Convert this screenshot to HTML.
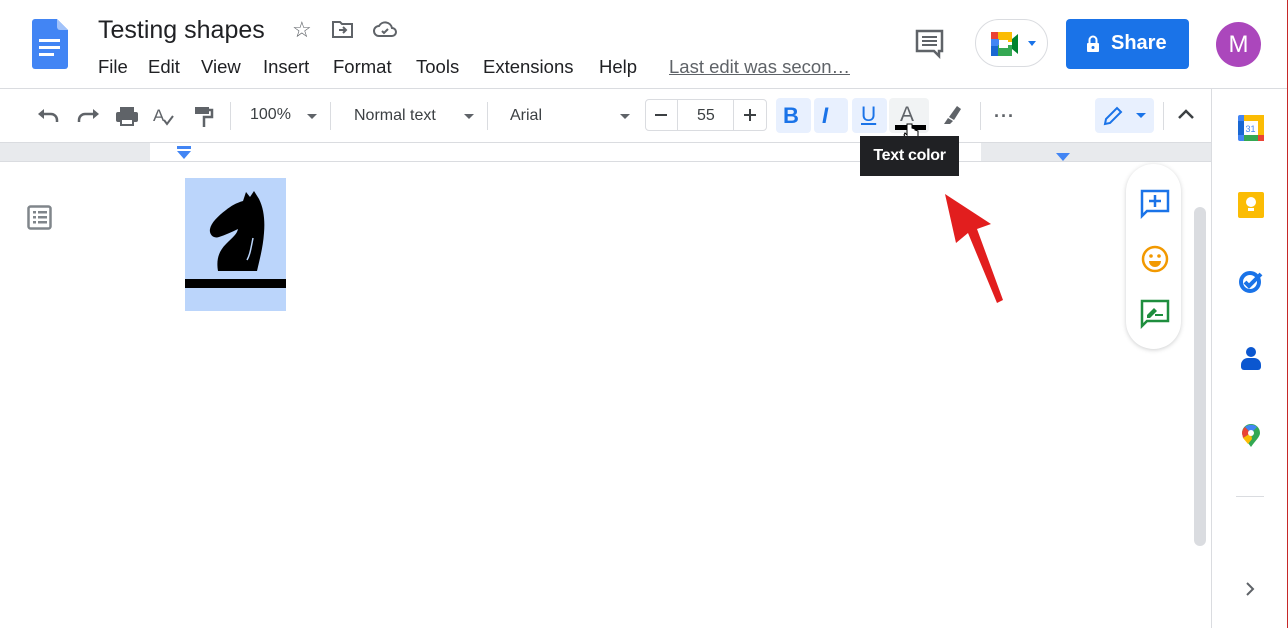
<!DOCTYPE html><html><head><style>
body{margin:0;width:1288px;height:628px;overflow:hidden;background:#fff;font-family:"Liberation Sans",Arial,sans-serif;position:relative;color:#3c4043}
.a{position:absolute}
.tb{font-size:16px;color:#3c4043}
.sep{position:absolute;top:102px;width:1px;height:28px;background:#dadce0}
</style></head><body>
<div class="a" style="right:0;top:0;width:1px;height:628px;background:#c62828"></div>
<svg class="a" style="left:32px;top:19px" width="36" height="50" viewBox="0 0 36 50"><path d="M3 0h22l11 11v36a3 3 0 0 1-3 3H3a3 3 0 0 1-3-3V3a3 3 0 0 1 3-3z" fill="#4285f4"/><path d="M25 0v8a3 3 0 0 0 3 3h8z" fill="#a1c2fa"/><rect x="7" y="20" width="21" height="3" fill="#fff"/><rect x="7" y="27" width="21" height="3" fill="#fff"/><rect x="7" y="34" width="15" height="3" fill="#fff"/></svg>
<div class="a" style="left:98px;top:16px;font-size:25px;color:#202124">Testing shapes</div>
<div class="a" style="left:292px;top:17px;font-size:22px;color:#5f6368">☆</div>
<svg class="a" style="left:332px;top:20px" width="22" height="18" viewBox="0 0 22 18"><path d="M1 2h7l2 2h10v13H1z" fill="none" stroke="#5f6368" stroke-width="2"/><path d="M7 10h7M11 7l3 3-3 3" fill="none" stroke="#5f6368" stroke-width="2"/></svg>
<svg class="a" style="left:373px;top:20px" width="24" height="18" viewBox="0 0 24 18"><path d="M6 16a5 5 0 0 1 0-10 7 7 0 0 1 13 2 4 4 0 0 1 0 8z" fill="none" stroke="#5f6368" stroke-width="2"/><path d="M9 11l2 2 4-4" fill="none" stroke="#5f6368" stroke-width="2"/></svg>
<div class="a" style="top:56px;left:98px;font-size:18.5px;color:#202124">
<span class="a" style="left:0">File</span><span class="a" style="left:50px">Edit</span><span class="a" style="left:103px">View</span><span class="a" style="left:165px">Insert</span><span class="a" style="left:235px">Format</span><span class="a" style="left:318px">Tools</span><span class="a" style="left:385px;white-space:nowrap">Extensions</span><span class="a" style="left:501px">Help</span></div>
<div class="a" style="left:669px;top:56px;font-size:18.5px;color:#5f6368;text-decoration:underline;white-space:nowrap">Last edit was secon…</div>
<svg class="a" style="left:915px;top:29px" width="30" height="30" viewBox="0 0 30 30"><path d="M2 2h25v20h-3v5l-5-5H2z" fill="none" stroke="#5f6368" stroke-width="2.5"/><rect x="7" y="7" width="15" height="2" fill="#5f6368"/><rect x="7" y="11" width="15" height="2" fill="#5f6368"/><rect x="7" y="15" width="15" height="2" fill="#5f6368"/></svg>
<div class="a" style="left:975px;top:19px;width:73px;height:48px;border:1px solid #dadce0;border-radius:25px;box-sizing:border-box"></div>
<svg class="a" style="left:990px;top:31px" width="46" height="26" viewBox="0 0 46 26"><rect x="1" y="1" width="12" height="12" fill="#ea4335"/><rect x="8" y="1" width="14" height="10" fill="#fbbc04"/><rect x="1" y="8" width="8" height="10" fill="#4285f4"/><rect x="1" y="15" width="8" height="10" fill="#1967d2"/><rect x="8" y="14" width="14" height="11" fill="#34a853"/><path d="M22 8l6-5v20l-6-5z" fill="#00832d"/><rect x="9" y="9" width="9" height="8" fill="#fff"/><path d="M38 10h8l-4 5z" fill="#1a73e8"/></svg>
<div class="a" style="left:1066px;top:19px;width:123px;height:50px;background:#1a73e8;border-radius:4px;color:#fff;font-size:20px;font-weight:bold"><svg class="a" style="left:20px;top:16px" width="14" height="18" viewBox="0 0 14 18"><path d="M3.5 8V5a3.5 3.5 0 0 1 7 0v3" fill="none" stroke="#fff" stroke-width="2"/><rect x="1" y="8" width="12" height="9" rx="1" fill="#fff"/><circle cx="7" cy="12.5" r="1.5" fill="#1a73e8"/></svg><span class="a" style="left:45px;top:13px">Share</span></div>
<div class="a" style="left:1216px;top:22px;width:45px;height:45px;border-radius:50%;background:#ab47bc;color:#fff;font-size:24px;text-align:center;line-height:45px">M</div>
<div class="a" style="left:0;top:88px;width:1287px;height:1px;background:#dadce0"></div>
<svg class="a" style="left:37px;top:106px" width="180" height="22" viewBox="0 0 180 22"><path d="M4 8h10a6 6 0 0 1 6 6v2" fill="none" stroke="#5f6368" stroke-width="2.5"/><path d="M1 8l6-5v10z" fill="#5f6368"/><path d="M58 8H48a6 6 0 0 0-6 6v2" fill="none" stroke="#5f6368" stroke-width="2.5"/><path d="M62 8l-6-5v10z" fill="#5f6368"/><rect x="83" y="1" width="14" height="5" fill="#5f6368"/><rect x="79" y="6" width="22" height="10" rx="2" fill="#5f6368"/><rect x="83" y="12" width="14" height="8" fill="#5f6368"/><rect x="85" y="14" width="10" height="4" fill="#fff"/><text x="116" y="15" font-size="17" fill="#5f6368" font-family="Liberation Sans">A</text><path d="M127 14l3 4 6-8" fill="none" stroke="#5f6368" stroke-width="2"/><rect x="158" y="1" width="14" height="7" fill="#5f6368"/><path d="M172 4h3v7h-8v10" fill="none" stroke="#5f6368" stroke-width="2.5"/></svg>
<div class="sep" style="left:230px"></div>
<div class="a tb" style="left:250px;top:106px">100%</div><div class="a" style="left:307px;top:114px;border:5px solid transparent;border-top-color:#5f6368"></div>
<div class="sep" style="left:330px"></div>
<div class="a tb" style="left:354px;top:107px">Normal text</div><div class="a" style="left:464px;top:114px;border:5px solid transparent;border-top-color:#5f6368"></div>
<div class="sep" style="left:487px"></div>
<div class="a tb" style="left:510px;top:107px">Arial</div><div class="a" style="left:620px;top:114px;border:5px solid transparent;border-top-color:#5f6368"></div>
<div class="a" style="left:645px;top:99px;width:122px;height:32px;border:1px solid #dadce0;border-radius:4px;box-sizing:border-box"></div>
<div class="a" style="left:677px;top:99px;width:1px;height:32px;background:#dadce0"></div><div class="a" style="left:733px;top:99px;width:1px;height:32px;background:#dadce0"></div>
<div class="a" style="left:655px;top:114px;width:12px;height:2px;background:#3c4043"></div>
<div class="a tb" style="left:697px;top:107px">55</div>
<div class="a" style="left:744px;top:114px;width:12px;height:2px;background:#3c4043"></div><div class="a" style="left:749px;top:109px;width:2px;height:12px;background:#3c4043"></div>
<div class="a" style="left:776px;top:98px;width:35px;height:35px;background:#e8f0fe;border-radius:4px"></div>
<div class="a" style="left:814px;top:98px;width:34px;height:35px;background:#e8f0fe;border-radius:4px"></div>
<div class="a" style="left:852px;top:98px;width:35px;height:35px;background:#e8f0fe;border-radius:4px"></div>
<div class="a" style="left:889px;top:98px;width:40px;height:35px;background:#f1f3f4;border-radius:4px"></div>
<div class="a" style="left:783px;top:103px;font-size:22px;font-weight:bold;color:#1a73e8">B</div>
<div class="a" style="left:822px;top:103px;font-size:22px;font-weight:bold;font-style:italic;color:#1a73e8">I</div>
<div class="a" style="left:861px;top:103px;font-size:21px;color:#1a73e8;text-decoration:underline">U</div>
<div class="a" style="left:900px;top:103px;font-size:21px;color:#5f6368">A</div>
<div class="a" style="left:895px;top:125px;width:31px;height:5px;background:#000"></div>
<svg class="a" style="left:903px;top:122px" width="16" height="22" viewBox="0 0 16 22"><path d="M4 2v11l-2-2-1 2 5 7h8l1-6v-5l-3-1v-1l-3-1V2z" fill="#fff" stroke="#000"/></svg>
<svg class="a" style="left:940px;top:104px" width="22" height="22" viewBox="0 0 22 22"><path d="M9 13l8-11 4 3-7 11z" fill="#5f6368"/><path d="M8 14l5 3-3 3H4z" fill="#5f6368"/></svg>
<div class="sep" style="left:980px"></div>
<div class="a" style="left:994px;top:106px;font-size:18px;color:#5f6368;letter-spacing:1px;font-weight:bold">···</div>
<div class="a" style="left:1095px;top:98px;width:59px;height:35px;background:#e8f0fe;border-radius:4px"></div>
<svg class="a" style="left:1102px;top:105px" width="22" height="22" viewBox="0 0 22 22"><path d="M3 19l1-5L15 3l4 4L8 18z" fill="none" stroke="#1a73e8" stroke-width="2"/></svg>
<div class="a" style="left:1136px;top:113px;border:5px solid transparent;border-top-color:#1a73e8"></div>
<div class="sep" style="left:1163px"></div>
<svg class="a" style="left:1177px;top:108px" width="18" height="12" viewBox="0 0 18 12"><path d="M2 10l7-7 7 7" fill="none" stroke="#3c4043" stroke-width="2.5"/></svg>
<div class="a" style="left:0;top:142px;width:1211px;height:1px;background:#dadce0"></div>
<div class="a" style="left:0;top:143px;width:150px;height:18px;background:#e8eaed"></div>
<div class="a" style="left:981px;top:143px;width:230px;height:18px;background:#e8eaed"></div>
<div class="a" style="left:0;top:161px;width:1211px;height:1px;background:#dadce0"></div>
<div class="a" style="left:177px;top:146px;width:14px;height:3px;background:#4285f4"></div>
<div class="a" style="left:177px;top:151px;border-left:7px solid transparent;border-right:7px solid transparent;border-top:8px solid #4285f4"></div>
<div class="a" style="left:1056px;top:153px;border-left:7px solid transparent;border-right:7px solid transparent;border-top:8px solid #4285f4"></div>
<div class="a" style="left:860px;top:136px;width:99px;height:40px;background:#202124;color:#fff;font-size:16px;line-height:40px;text-align:center;font-weight:bold;letter-spacing:-0.3px">Text color</div>
<svg class="a" style="left:27px;top:205px" width="26" height="25" viewBox="0 0 26 25"><rect x="1.5" y="1.5" width="22" height="22" rx="2" fill="none" stroke="#80868b" stroke-width="2.5"/><rect x="6" y="6" width="3" height="2.5" fill="#80868b"/><rect x="11" y="6" width="9" height="2.5" fill="#80868b"/><rect x="6" y="11" width="3" height="2.5" fill="#80868b"/><rect x="11" y="11" width="9" height="2.5" fill="#80868b"/><rect x="6" y="16" width="3" height="2.5" fill="#80868b"/><rect x="11" y="16" width="9" height="2.5" fill="#80868b"/></svg>
<div class="a" style="left:185px;top:178px;width:101px;height:133px;background:#bbd5fb"></div>
<svg class="a" style="left:185px;top:178px" width="101" height="133" viewBox="0 0 101 133"><path d="M58 23l3-9 4 5 4-6 5 8c5 10 6 22 5 34-1 14-4 25-7 38H33c-2-12 1-20 8-27 7-7 11-10 12-15-6 3-13 6-19 8-6 2-10-3-9-8 1-6 8-13 16-19 5-4 10-7 17-9z" fill="#000"/><path d="M68 60c-2 10-3 17-6 22" stroke="#bbd5fb" stroke-width="1.5" fill="none"/><rect x="0" y="101" width="101" height="9" fill="#000"/></svg>
<svg class="a" style="left:935px;top:188px" width="80" height="120" viewBox="0 0 80 120"><path d="M10 6l46 30-14 5 26 71-6 3-29-70-12 10z" fill="#e21e1e"/></svg>
<div class="a" style="left:1126px;top:164px;width:55px;height:185px;border-radius:28px;background:#fff;box-shadow:0 1px 4px rgba(60,64,67,.25)"></div>
<svg class="a" style="left:1140px;top:189px" width="30" height="30" viewBox="0 0 30 30"><path d="M2 2h26v20H7l-5 5z" fill="none" stroke="#1a73e8" stroke-width="2.5"/><path d="M15 6v12M9 12h12" stroke="#1a73e8" stroke-width="2.5"/></svg>
<svg class="a" style="left:1140px;top:244px" width="30" height="30" viewBox="0 0 30 30"><circle cx="15" cy="15" r="12" fill="none" stroke="#f29900" stroke-width="2.5"/><circle cx="11" cy="12" r="1.8" fill="#f29900"/><circle cx="19" cy="12" r="1.8" fill="#f29900"/><path d="M9 17h12a6 6 0 0 1-12 0z" fill="#f29900"/></svg>
<svg class="a" style="left:1140px;top:299px" width="30" height="30" viewBox="0 0 30 30"><path d="M2 2h26v20H7l-5 5z" fill="none" stroke="#1e8e3e" stroke-width="2.5"/><path d="M7 16l7-7 3 3-7 7H7z" fill="#1e8e3e"/><rect x="15" y="15" width="8" height="2" fill="#1e8e3e"/></svg>
<div class="a" style="left:1194px;top:207px;width:12px;height:339px;border-radius:6px;background:#dadce0"></div>
<div class="a" style="left:1211px;top:88px;width:1px;height:540px;background:#dadce0"></div>
<svg class="a" style="left:1238px;top:115px" width="26" height="26" viewBox="0 0 26 26"><rect x="0" y="0" width="26" height="26" rx="2" fill="#4285f4"/><rect x="6" y="0" width="20" height="20" fill="#fbbc04"/><rect x="0" y="6" width="6" height="14" fill="#1967d2"/><rect x="6" y="20" width="14" height="6" fill="#34a853"/><rect x="20" y="20" width="6" height="6" fill="#ea4335"/><rect x="6" y="6" width="14" height="14" fill="#fff"/><text x="7.5" y="17" font-size="9" fill="#4285f4" font-family="Liberation Sans">31</text></svg>
<div class="a" style="left:1238px;top:192px;width:26px;height:26px;border-radius:2px;background:#fbbc04"></div>
<div class="a" style="left:1246px;top:197px;width:10px;height:10px;border-radius:50%;background:#fff"></div><div class="a" style="left:1248px;top:208px;width:6px;height:3px;background:#fff"></div>
<svg class="a" style="left:1238px;top:268px" width="28" height="28" viewBox="0 0 28 28"><circle cx="12" cy="14" r="9" fill="none" stroke="#1a73e8" stroke-width="4"/><path d="M7 14l4 4 12-12" fill="none" stroke="#1a73e8" stroke-width="4"/></svg>
<div class="a" style="left:1246px;top:347px;width:10px;height:10px;border-radius:50%;background:#0b57d0"></div>
<div class="a" style="left:1241px;top:358px;width:20px;height:12px;border-radius:7px 7px 3px 3px;background:#0b57d0"></div>
<svg class="a" style="left:1241px;top:424px" width="20" height="24" viewBox="0 0 20 24"><path d="M10 23C6 17 1 13 1 9a9 9 0 0 1 18 0c0 4-5 8-9 14z" fill="#34a853"/><path d="M1 9a9 9 0 0 1 3-6l6 6-8 5z" fill="#ea4335"/><path d="M4 3a9 9 0 0 1 12 0l-6 6z" fill="#4285f4"/><path d="M2 14l8-5 1 6-4 5z" fill="#fbbc04"/><circle cx="10" cy="9" r="3" fill="#fff"/></svg>
<div class="a" style="left:1236px;top:496px;width:28px;height:1px;background:#dadce0"></div>
<svg class="a" style="left:1244px;top:581px" width="12" height="16" viewBox="0 0 12 16"><path d="M3 2l6 6-6 6" fill="none" stroke="#5f6368" stroke-width="2"/></svg>
</body></html>
